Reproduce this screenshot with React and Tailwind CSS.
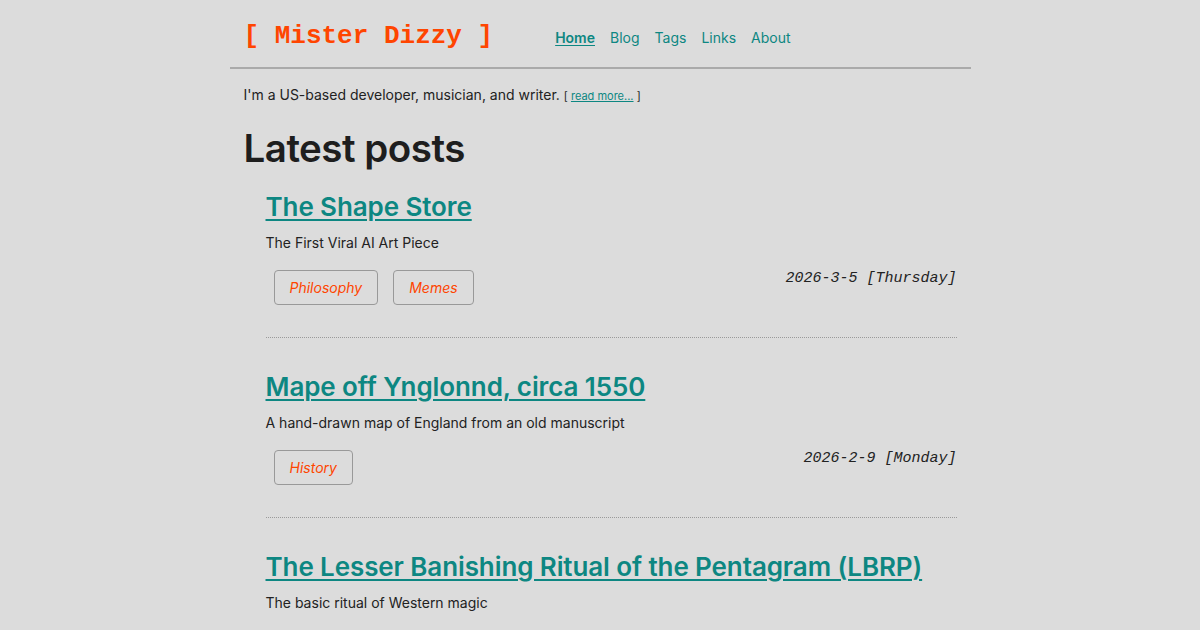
const NAV = ['Home', 'Blog', 'Tags', 'Links', 'About'];

const POSTS = [
  {
    title: 'The Shape Store',
    summary: 'The First Viral AI Art Piece',
    tags: ['Philosophy', 'Memes'],
    date: '2026-3-5 [Thursday]',
  },
  {
    title: 'Mape off Ynglonnd, circa 1550',
    summary: 'A hand-drawn map of England from an old manuscript',
    tags: ['History'],
    date: '2026-2-9 [Monday]',
  },
  {
    title: 'The Lesser Banishing Ritual of the Pentagram (LBRP)',
    summary: 'The basic ritual of Western magic',
    tags: ['Magic'],
    date: '2026-1-21 [Wednesday]',
  },
];

const Post = ({ post, last }) => (
  <article className={`pt-[29px] pb-[32px] ${last ? '' : 'border-b border-dotted border-[#9a9a9a]'}`}>
    <h2 className="text-[26px] leading-[40px] font-semibold tracking-[-0.1px] whitespace-nowrap">
      <a href="#" className="text-[#0d8782] underline underline-offset-[3px] decoration-2">
        {post.title}
      </a>
    </h2>
    <p className="mt-[6px] text-[14px] leading-[20px] text-[#222]">{post.summary}</p>
    <div className="mt-[17px] flex justify-between items-start">
      <div className="flex gap-[15px] pl-[8px]">
        {post.tags.map(t => (
          <a
            key={t}
            href="#"
            className="h-[35px] px-[15px] flex items-center rounded-[4px] border border-[#999] text-[14px] italic text-[#ff4500]"
          >
            {t}
          </a>
        ))}
      </div>
      <span className="mt-[-2px] font-['Liberation_Mono',monospace] italic text-[15px] text-[#222]">
        {post.date}
      </span>
    </div>
  </article>
);

export default function App() {
  return (
    <div className="min-h-[630px] bg-[#dcdcdc] font-['Inter',sans-serif] text-[#222]">
      <div className="w-[741px] mx-auto">
        <header className="h-[69px] px-[14px] flex items-center border-b-2 border-[#aaaaaa]">
          <a href="#" className="font-['Liberation_Mono',monospace] font-bold text-[26px] text-[#ff4500] whitespace-pre mt-[6px]">
            [ Mister Dizzy ]
          </a>
          <nav className="ml-[62px] flex gap-[15px] text-[14px] mt-[7px]">
            {NAV.map((n, i) => (
              <a
                key={n}
                href="#"
                className={i === 0 ? 'text-[#0d8782] font-semibold underline underline-offset-2' : 'text-[#0d8782]'}
              >
                {n}
              </a>
            ))}
          </nav>
        </header>
        <div className="px-[14px]">
          <p className="mt-[16px] text-[14px] leading-[20px]">
            I'm a US-based developer, musician, and writer.{' '}
            <span className="text-[11px]">
              [ <a href="#" className="text-[#0d8782] underline">read more...</a> ]
            </span>
          </p>
          <h1 className="mt-[19px] text-[38.5px] leading-[46px] font-semibold tracking-[-0.5px] text-[#1e1e1e]">
            Latest posts
          </h1>
          <div className="pl-[22px] mt-[-13px]">
            {POSTS.map((p, i) => (
              <Post key={p.title} post={p} last={i === POSTS.length - 1} />
            ))}
          </div>
        </div>
      </div>
    </div>
  );
}
